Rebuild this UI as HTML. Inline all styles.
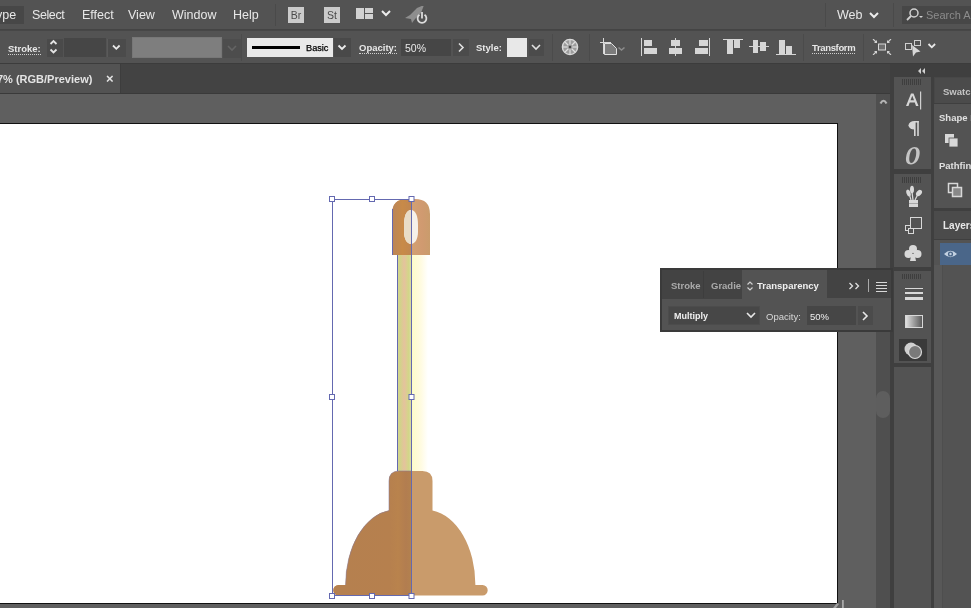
<!DOCTYPE html>
<html><head><meta charset="utf-8">
<style>
*{margin:0;padding:0;box-sizing:border-box}
html,body{width:971px;height:608px;overflow:hidden;background:#5e5e5e;font-family:"Liberation Sans",sans-serif;}
.a{position:absolute}
.t{position:absolute;white-space:nowrap;color:#e6e6e6}
#menu{left:0;top:0;width:971px;height:30px;background:#535353;border-bottom:1px solid #444}
#ctrl{left:0;top:30px;width:971px;height:34px;background:#535353;border-bottom:1px solid #3c3c3c}
#tabs{left:0;top:64px;width:890px;height:30px;background:#434343;border-bottom:1px solid #3a3a3a}
.mi{font-size:12.5px;top:8px;color:#e8e8e8}
.lbl{font-size:9.5px;font-weight:bold;color:#e8e8e8;border-bottom:1px dotted #cfcfcf;line-height:11px}
.chev{position:absolute;width:6px;height:6px;border-right:1.6px solid #ddd;border-bottom:1.6px solid #ddd;transform:rotate(45deg)}
.ibox{position:absolute;background:#474747;border:1px solid #4b4b4b}
.ic{position:absolute;background:#d6d6d6}
.t,.a{will-change:transform}</style></head><body>


<!-- CANVAS -->
<div class="a" style="left:0;top:94px;width:876px;height:514px;background:#5f5f5f"></div>
<div class="a" style="left:0;top:123px;width:838px;height:481px;background:#fff;border-top:1px solid #111;border-right:1px solid #111;border-bottom:1px solid #111"></div>
<!-- scrollbar -->
<div class="a" style="left:876px;top:93px;width:14px;height:515px;background:#4f4f4f"></div>
<svg class="a" style="left:877px;top:96px" width="12" height="10"><path d="M3.5 7.5 Q6.5 2 9.5 7.5" fill="none" stroke="#b4b4b4" stroke-width="2.2"/></svg>
<div class="a" style="left:876px;top:391px;width:14px;height:27px;background:#5e5e5e;border-radius:7px"></div>
<!-- cursor -->
<svg class="a" style="left:830px;top:590px" width="22" height="18"><rect x="12" y="10" width="1.8" height="8" fill="#a8a8a8"/><path d="M3 18 L7 13 L9 14 L6 18Z" fill="#a0a0a0"/></svg>

<!-- DOCK -->
<div class="a" style="left:890px;top:64px;width:81px;height:544px;background:#3f3f3f"></div>
<svg class="a" style="left:917px;top:67px" width="10" height="8"><path d="M1 4 L4 1 L4 7Z M5 4 L8 1 L8 7Z" fill="#d0d0d0"/></svg>
<!-- icon column -->
<div class="a" style="left:894px;top:77px;width:37px;height:531px;background:#535353"></div>
<div class="a" style="left:902px;top:79px;width:20px;height:6px;background:repeating-linear-gradient(90deg,#3e3e3e 0 1px,transparent 1px 2px)"></div>
<svg class="a" style="left:904px;top:91px" width="20" height="20"><path d="M2 15 L7 2.5 L9.5 2.5 L14.5 15 L12 15 L10.8 11.5 L5.7 11.5 L4.5 15Z M6.5 9.3 L10 9.3 L8.25 4.8Z" fill="#d6d6d6" fill-rule="evenodd"/><rect x="16" y="0.5" width="1.2" height="18" fill="#d0d0d0"/></svg>

<svg class="a" style="left:906px;top:120px" width="14" height="17"><path d="M8 1 L12.7 1 L12.7 2.5 L8 2.5Z" fill="#d6d6d6"/><path d="M8.5 1 A6 4.3 0 0 0 8.5 9.6 Z" fill="#d6d6d6"/><rect x="8" y="1" width="1.6" height="15" fill="#d6d6d6"/><rect x="11.2" y="1" width="1.6" height="15" fill="#d6d6d6"/></svg>
<svg class="a" style="left:904px;top:146px" width="18" height="20"><path d="M10.5 1 C14.5 1 16.5 4 15.5 9 C14.5 15 11 18.5 7 18.5 C3 18.5 1.2 15.5 2.2 10.5 C3.2 4.5 6.5 1 10.5 1Z M10.3 2.5 C8 2.5 6.2 6 5.5 10 C4.8 14 5.5 17 7.3 17 C9.5 17 11.3 13.5 12 9.5 C12.7 5.5 12 2.5 10.3 2.5Z" fill="#c4c4c4" fill-rule="evenodd"/></svg>
<div class="a" style="left:894px;top:169px;width:37px;height:5px;background:#3f3f3f"></div>
<div class="a" style="left:902px;top:177px;width:20px;height:6px;background:repeating-linear-gradient(90deg,#3e3e3e 0 1px,transparent 1px 2px)"></div>
<svg class="a" style="left:905px;top:185px" width="18" height="23"><g fill="#d8d8d8"><ellipse cx="3.5" cy="8" rx="2" ry="3.5" transform="rotate(-20 3.5 8)"/><ellipse cx="7" cy="4.5" rx="2" ry="3.8"/><ellipse cx="14" cy="8" rx="2.5" ry="3.5" transform="rotate(40 14 8)"/></g><g stroke="#d8d8d8" stroke-width="1.2"><line x1="4.5" y1="10" x2="6" y2="15"/><line x1="7" y1="7" x2="8" y2="15"/><line x1="12.5" y1="10" x2="10" y2="15"/></g><rect x="4" y="15" width="9" height="7" fill="#d8d8d8"/><line x1="4" y1="18.5" x2="13" y2="18.5" stroke="#9a9a9a" stroke-width="0.8"/></svg>
<svg class="a" style="left:904px;top:217px" width="19" height="18"><rect x="6.5" y="0.5" width="11" height="11" fill="none" stroke="#d8d8d8"/><rect x="1.5" y="8.5" width="5" height="5" fill="#535353" stroke="#d8d8d8"/><rect x="4.5" y="11.5" width="5" height="5" fill="#535353" stroke="#d8d8d8"/></svg>
<svg class="a" style="left:904px;top:244px" width="18" height="18"><circle cx="9" cy="5" r="4" fill="#d8d8d8"/><circle cx="4.5" cy="10" r="4" fill="#d8d8d8"/><circle cx="13.5" cy="10" r="4" fill="#d8d8d8"/><path d="M7.5 10 L6 17 L12 17 L10.5 10Z" fill="#d8d8d8"/></svg>
<div class="a" style="left:894px;top:267px;width:37px;height:4px;background:#3f3f3f"></div>
<div class="a" style="left:902px;top:274px;width:20px;height:5px;background:repeating-linear-gradient(90deg,#3e3e3e 0 1px,transparent 1px 2px)"></div>
<div class="a" style="left:905px;top:288px;width:18px;height:1px;background:#d8d8d8"></div>
<div class="a" style="left:905px;top:292px;width:18px;height:2px;background:#d8d8d8"></div>
<div class="a" style="left:905px;top:297px;width:18px;height:3px;background:#d8d8d8"></div>
<div class="a" style="left:905px;top:315px;width:18px;height:13px;background:linear-gradient(90deg,#e0e0e0,#5a5a5a);border:1px solid #d8d8d8"></div>
<div class="a" style="left:899px;top:339px;width:28px;height:22px;background:#3a3a3a"></div>
<svg class="a" style="left:903px;top:341px" width="20" height="19"><circle cx="8" cy="8" r="6.5" fill="#cfcfcf"/><circle cx="12" cy="11" r="6.5" fill="#7a7a7a" stroke="#d8d8d8" stroke-width="1.2"/></svg>
<div class="a" style="left:894px;top:363px;width:37px;height:4px;background:#3f3f3f"></div>

<!-- right panel -->
<div class="a" style="left:934px;top:77px;width:37px;height:26px;background:#474747"></div>
<div class="a" style="left:935px;top:78px;width:36px;height:25px;background:#4b4b4b"></div>
<div class="t" style="left:943px;top:86px;font-size:9.5px;font-weight:bold;color:#c4c4c4">Swatches</div>
<div class="a" style="left:934px;top:104px;width:37px;height:104px;background:#535353"></div>
<div class="t" style="left:939px;top:112px;font-size:9.5px;font-weight:bold;color:#e0e0e0">Shape Builder</div>
<svg class="a" style="left:944px;top:133px" width="16" height="16"><rect x="1" y="1" width="9" height="9" fill="#d8d8d8"/><rect x="5" y="5" width="9" height="9" fill="#d8d8d8" stroke="#535353" stroke-width="0.8"/></svg>
<div class="t" style="left:939px;top:160px;font-size:9.5px;font-weight:bold;color:#e0e0e0">Pathfinder</div>
<svg class="a" style="left:947px;top:182px" width="16" height="16"><rect x="1.5" y="1.5" width="9" height="9" fill="none" stroke="#d8d8d8" stroke-width="1.5"/><rect x="5.5" y="5.5" width="9" height="9" fill="#888" stroke="#d8d8d8" stroke-width="1.5"/></svg>
<div class="a" style="left:934px;top:211px;width:37px;height:28px;background:#4b4b4b"></div>
<div class="t" style="left:943px;top:220px;font-size:10px;font-weight:bold;color:#e8e8e8">Layers</div>
<div class="a" style="left:934px;top:240px;width:37px;height:368px;background:#535353"></div>
<div class="a" style="left:934px;top:265px;width:9px;height:343px;background:#585858;border-right:1px solid #4e4e4e"></div>
<div class="a" style="left:940px;top:243px;width:31px;height:22px;background:#4a6689"></div>
<svg class="a" style="left:943px;top:249px" width="15" height="10"><path d="M1 5 Q7.5 -1.5 14 5 Q7.5 11.5 1 5Z" fill="#c4d2e2"/><circle cx="7.5" cy="5" r="2.6" fill="#4a6689"/><circle cx="7.5" cy="5" r="1.2" fill="#c4d2e2"/></svg>

<!-- FLOATING TRANSPARENCY PANEL -->
<div class="a" style="left:660px;top:268px;width:233px;height:64px;background:#3a3a3a"></div>
<div class="a" style="left:662px;top:270px;width:229px;height:60px;background:#535353"></div>
<div class="a" style="left:662px;top:270px;width:80px;height:29px;background:#434343"></div>
<div class="a" style="left:703px;top:271px;width:1px;height:27px;background:#3d3d3d"></div>
<div class="a" style="left:827px;top:270px;width:64px;height:28px;background:#434343"></div>
<div class="t" style="left:671px;top:280px;font-size:9.5px;font-weight:bold;color:#aaaaaa">Stroke</div>
<div class="t" style="left:711px;top:280px;font-size:9.5px;font-weight:bold;color:#aaaaaa">Gradie</div>
<svg class="a" style="left:746px;top:280px" width="8" height="12"><path d="M1.5 4.5 L4 2 L6.5 4.5 M1.5 7.5 L4 10 L6.5 7.5" fill="none" stroke="#cfcfcf" stroke-width="1.2"/></svg>
<div class="t" style="left:757px;top:280px;font-size:9.5px;font-weight:bold;color:#f0f0f0">Transparency</div>
<svg class="a" style="left:848px;top:281px" width="14" height="10"><path d="M1.5 2 L4.5 5 L1.5 8 M7.5 2 L10.5 5 L7.5 8" fill="none" stroke="#e0e0e0" stroke-width="1.3"/></svg>
<div class="a" style="left:868px;top:279px;width:1px;height:13px;background:#aaa"></div>
<div class="a" style="left:876px;top:282px;width:11px;height:1px;background:#d8d8d8;box-shadow:0 3px 0 #d8d8d8,0 6px 0 #d8d8d8,0 9px 0 #d8d8d8"></div>
<div class="a" style="left:668px;top:306px;width:92px;height:19px;background:#474747;border:1px solid #4c4c4c"></div>
<div class="t" style="left:674px;top:311px;font-size:9px;font-weight:bold;color:#f0f0f0">Multiply</div>
<svg class="a" style="left:745px;top:310px" width="12" height="10"><path d="M2 3 L6 7 L10 3" fill="none" stroke="#e8e8e8" stroke-width="1.6"/></svg>
<div class="t" style="left:766px;top:311px;font-size:9.5px;color:#d8d8d8">Opacity:</div>
<div class="a" style="left:807px;top:306px;width:49px;height:19px;background:#464646"></div>
<div class="t" style="left:810px;top:311px;font-size:9.5px;color:#f0f0f0">50%</div>
<div class="a" style="left:858px;top:306px;width:15px;height:19px;background:#4b4b4b"></div>
<svg class="a" style="left:860px;top:310px" width="10" height="12"><path d="M3 2 L7 6 L3 10" fill="none" stroke="#e8e8e8" stroke-width="1.6"/></svg>

<!-- ARTWORK -->
<svg class="a" style="left:0;top:0" width="971" height="608">
  <defs>
    <linearGradient id="shaft" x1="0" x2="1" y1="0" y2="0">
      <stop offset="0" stop-color="#d6d694"/><stop offset="0.18" stop-color="#d0d488"/><stop offset="0.5" stop-color="#e5c29d"/><stop offset="0.82" stop-color="#d3d688"/><stop offset="1" stop-color="#d8daa0"/>
    </linearGradient>
    <linearGradient id="capL" x1="392" x2="411" y1="0" y2="0" gradientUnits="userSpaceOnUse">
      <stop offset="0" stop-color="#b9855a"/><stop offset="0.55" stop-color="#c88a48"/><stop offset="1" stop-color="#c08650"/>
    </linearGradient>
    <linearGradient id="capR" x1="411" x2="430" y1="0" y2="0" gradientUnits="userSpaceOnUse">
      <stop offset="0" stop-color="#d3a173"/><stop offset="0.6" stop-color="#d09a70"/><stop offset="1" stop-color="#c99c6c"/>
    </linearGradient>
    <linearGradient id="cupL" x1="340" x2="411" y1="0" y2="0" gradientUnits="userSpaceOnUse">
      <stop offset="0" stop-color="#b5804f"/><stop offset="0.7" stop-color="#b6804e"/><stop offset="0.82" stop-color="#b9834d"/><stop offset="0.93" stop-color="#b27d50"/><stop offset="1" stop-color="#b3814e"/>
    </linearGradient>
    <linearGradient id="glow" x1="0" x2="1" y1="0" y2="0">
      <stop offset="0" stop-color="#fcfcc6"/><stop offset="0.6" stop-color="#fffbe2"/><stop offset="1" stop-color="#ffffff"/>
    </linearGradient>
  </defs>
  <rect x="411" y="255" width="17" height="216" fill="url(#glow)"/>
  <rect x="397.5" y="255" width="13.5" height="216" fill="url(#shaft)"/>
  <!-- cap -->
  <path d="M392 255 L392 214 Q392 199 407 199 L415 199 Q430 199 430 214 L430 255 Z" fill="url(#capR)"/>
  <path d="M392 255 L392 214 Q392 199 407 199 L411 199 L411 255 Z" fill="url(#capL)"/>
  <path d="M411 210 C416 210 418 217 418 225 L418 232 C418 239 415 244 411 244 C407 244 404 239 404 232 L404 225 C404 217 406 210 411 210 Z" fill="#f6f1ea"/>
  <path d="M411 210 C406 210 404 217 404 225 L404 232 C404 239 407 244 411 244 Z" fill="#e9dcc6"/>
  <line x1="392.5" y1="209" x2="392.5" y2="255" stroke="#6469b0" stroke-width="1"/>
  <!-- cup -->
  <clipPath id="leftclip"><rect x="0" y="0" width="411" height="608"/></clipPath>
  <path id="cupp" d="M389 510.6 L389 481 Q389 471 399 471 L422.5 471 Q432.5 471 432.5 481 L432.5 510.6 A49.4 75 0 0 1 475.4 585 L482.5 585 A5.2 5.2 0 0 1 482.5 595.4 L338.5 595.4 A5.2 5.2 0 0 1 338.5 585 L345.6 585 A49.4 75 0 0 1 389 510.6 Z" fill="#c99b6b"/>
  <path d="M389 510.6 L389 481 Q389 471 399 471 L422.5 471 Q432.5 471 432.5 481 L432.5 510.6 A49.4 75 0 0 1 475.4 585 L482.5 585 A5.2 5.2 0 0 1 482.5 595.4 L338.5 595.4 A5.2 5.2 0 0 1 338.5 585 L345.6 585 A49.4 75 0 0 1 389 510.6 Z" fill="url(#cupL)" clip-path="url(#leftclip)"/>
  <path d="M411 471 L399 471 Q389 471 389 481 L389 510.6 A49.4 75 0 0 0 345.6 585" fill="none" stroke="#8a7c98" stroke-width="0.8" opacity="0.7"/>
  <!-- selection -->
  <g fill="none" stroke="#6469b0" stroke-width="1">
    <rect x="332.5" y="199.5" width="79" height="396"/>
    <line x1="397.5" y1="255" x2="397.5" y2="471"/>
  </g>
  <g fill="#fff" stroke="#6469b0" stroke-width="1">
    <rect x="329.5" y="196.5" width="5" height="5"/><rect x="369.5" y="196.5" width="5" height="5"/><rect x="409" y="196.5" width="5" height="5"/>
    <rect x="329.5" y="394.5" width="5" height="5"/><rect x="409" y="394.5" width="5" height="5"/>
    <rect x="329.5" y="593.5" width="5" height="5"/><rect x="369.5" y="593.5" width="5" height="5"/><rect x="409" y="593.5" width="5" height="5"/>
  </g>
</svg>

<!-- MENU BAR -->
<div id="menu" class="a">
  <div class="a" style="left:0;top:6px;width:24px;height:18px;background:#474747"></div>
  <div class="t mi" style="left:-4.5px">ype</div>
  <div class="t mi" style="left:32px;letter-spacing:-0.4px">Select</div>
  <div class="t mi" style="left:82px">Effect</div>
  <div class="t mi" style="left:128px">View</div>
  <div class="t mi" style="left:172px">Window</div>
  <div class="t mi" style="left:233px">Help</div>
  <div class="a" style="left:275px;top:4px;width:1px;height:22px;background:#4a4a4a"></div>
  <div class="a" style="left:288px;top:7px;width:16px;height:16px;background:#cbcbcb;color:#4a4a4a;font-size:10.5px;text-align:center;line-height:16px">Br</div>
  <div class="a" style="left:324px;top:7px;width:16px;height:16px;background:#cbcbcb;color:#4a4a4a;font-size:10.5px;text-align:center;line-height:16px">St</div>
  <div class="a" style="left:356px;top:8px;width:8px;height:11px;background:#d2d2d2"></div>
  <div class="a" style="left:365px;top:8px;width:8px;height:5px;background:#d2d2d2"></div>
  <div class="a" style="left:365px;top:14px;width:8px;height:5px;background:#d2d2d2"></div>
  <svg class="a" style="left:380px;top:8px" width="12" height="10"><path d="M2 3 L6 7 L10 3" fill="none" stroke="#ececec" stroke-width="2"/></svg>
  <div class="a" style="left:404px;top:6px;width:26px;height:20px">
    <svg width="26" height="20"><path d="M1 12 L6 9 L13 2 L20 -1 L17 7 L11 13 L8 17 L7 13 Z" fill="#8e8e8e"/><path d="M15.5 8.8 A4.4 4.4 0 1 0 20.5 8.8" fill="#535353" stroke="#dcdcdc" stroke-width="1.8"/><line x1="18" y1="6" x2="18" y2="12.5" stroke="#dcdcdc" stroke-width="1.8"/></svg>
  </div>
  <div class="a" style="left:825px;top:3px;width:1px;height:24px;background:#4a4a4a"></div>
  <div class="t mi" style="left:837px">Web</div>
  <svg class="a" style="left:868px;top:10px" width="12" height="10"><path d="M2 3 L6 7 L10 3" fill="none" stroke="#ececec" stroke-width="2"/></svg>
  <div class="a" style="left:893px;top:3px;width:1px;height:24px;background:#4a4a4a"></div>
  <div class="a" style="left:902px;top:6px;width:69px;height:18px;background:#474747"></div>
  <svg class="a" style="left:904px;top:7px" width="20" height="16"><circle cx="10" cy="6" r="4" fill="none" stroke="#d0d0d0" stroke-width="1.5"/><line x1="7" y1="9" x2="3" y2="13" stroke="#d0d0d0" stroke-width="1.8"/><path d="M15 9 L19 9 L17 11Z" fill="#d0d0d0"/></svg>
  <div class="t" style="left:926px;top:9px;font-size:11px;color:#8c8c8c">Search A</div>
</div>

<!-- CONTROL BAR -->
<div id="ctrl" class="a">
  <div class="a" style="left:0;top:0;width:971px;height:1px;background:#474747"></div>
  <div class="t lbl" style="left:8px;top:13px">Stroke:</div>
  <div class="ibox" style="left:47px;top:9px;width:16px;height:18px;background:#4a4a4a;border:none"></div>
  <svg class="a" style="left:48px;top:8px" width="12" height="16"><path d="M2.5 6 L5.5 3 L8.5 6" fill="none" stroke="#e4e4e4" stroke-width="1.8"/><path d="M2.5 11.5 L5.5 14.5 L8.5 11.5" fill="none" stroke="#e4e4e4" stroke-width="1.8"/></svg>
  <div class="ibox" style="left:64px;top:8px;width:42px;height:19px;background:#464646;border:none"></div>
  <div class="ibox" style="left:107px;top:9px;width:19px;height:18px;background:#4b4b4b;border:none;border-left:1px solid #5a5a5a"></div>
  <svg class="a" style="left:110px;top:12px" width="12" height="10"><path d="M3 3.5 L6.3 6.8 L9.6 3.5" fill="none" stroke="#e8e8e8" stroke-width="1.8"/></svg>
  <div class="a" style="left:132px;top:7px;width:90px;height:21px;background:#7e7e7e;border:1px solid #777"></div>
  <div class="a" style="left:223px;top:9px;width:18px;height:19px;background:#4d4d4d"></div><svg class="a" style="left:226px;top:13px" width="12" height="10"><path d="M2 3 L6 7 L10 3" fill="none" stroke="#646464" stroke-width="1.6"/></svg>
  <div class="a" style="left:241px;top:4px;width:1px;height:27px;background:#4b4b4b"></div>
  <div class="a" style="left:247px;top:8px;width:86px;height:19px;background:#e9e9e9"></div>
  <div class="a" style="left:252px;top:16px;width:48px;height:3px;background:#000"></div>
  <div class="t" style="left:306px;top:13px;font-size:9.2px;color:#000;-webkit-text-stroke:0.25px #000">Basic</div>
  <div class="a" style="left:334px;top:8px;width:17px;height:19px;background:#494949"></div>
  <svg class="a" style="left:336px;top:12px" width="12" height="10"><path d="M2.5 3.5 L6 7 L9.5 3.5" fill="none" stroke="#ececec" stroke-width="1.8"/></svg>
  <div class="t lbl" style="left:359px;top:12px">Opacity:</div>
  <div class="ibox" style="left:401px;top:9px;width:50px;height:17px;background:#464646;border:none"></div>
  <div class="t" style="left:405px;top:12px;font-size:10.5px;color:#e8e8e8">50%</div>
  <div class="ibox" style="left:453px;top:9px;width:16px;height:17px;background:#4b4b4b;border:none"></div>
  <svg class="a" style="left:456px;top:11px" width="10" height="13"><path d="M3 2.5 L7 6.5 L3 10.5" fill="none" stroke="#e0e0e0" stroke-width="1.6"/></svg>
  <div class="t lbl" style="left:476px;top:12px;border:none">Style:</div>
  <div class="a" style="left:507px;top:8px;width:20px;height:19px;background:#e8e8e8"></div>
  <div class="a" style="left:529px;top:9px;width:15px;height:17px;background:#4b4b4b"></div>
  <svg class="a" style="left:530px;top:12px" width="12" height="10"><path d="M2 3 L6 7 L10 3" fill="none" stroke="#e0e0e0" stroke-width="1.6"/></svg>
  <div class="a" style="left:552px;top:4px;width:1px;height:27px;background:#4b4b4b"></div>
  <svg class="a" style="left:561px;top:38px;top:8px" width="18" height="18"><circle cx="9" cy="9" r="7.6" fill="#9c9c9c" stroke="#dadada" stroke-width="1.4"/><g stroke="#dedede" stroke-width="1.2"><line x1="9" y1="2" x2="9" y2="16"/><line x1="2" y1="9" x2="16" y2="9"/><line x1="4" y1="4" x2="14" y2="14"/><line x1="14" y1="4" x2="4" y2="14"/></g><circle cx="9" cy="9" r="2.4" fill="#9c9c9c"/><circle cx="9" cy="9" r="1.2" fill="#444"/></svg>
  <div class="a" style="left:589px;top:4px;width:1px;height:27px;background:#4b4b4b"></div>
  <svg class="a" style="left:598px;top:6px" width="30" height="22"><path d="M5.5 2 L5.5 18 M2 6.5 L13 6.5" stroke="#d8d8d8" stroke-width="1" fill="none"/><path d="M6.5 7.5 L13.5 7.5 L18.5 12.5 L18.5 18.5 L6.5 18.5Z" fill="#7c7c7c" stroke="#e0e0e0" stroke-width="1"/><path d="M20.5 11.5 L23.5 14 L26.5 11.5" fill="none" stroke="#8c8c8c" stroke-width="1.6"/></svg>
  <!-- align left -->
  <div class="ic" style="left:641px;top:8px;width:1px;height:18px"></div>
  <div class="ic" style="left:644px;top:10px;width:8px;height:6px"></div>
  <div class="ic" style="left:644px;top:18px;width:13px;height:6px"></div>
  <!-- align h center -->
  <div class="ic" style="left:675px;top:8px;width:1px;height:18px"></div>
  <div class="ic" style="left:671px;top:10px;width:9px;height:6px"></div>
  <div class="ic" style="left:669px;top:18px;width:13px;height:6px"></div>
  <!-- align right -->
  <div class="ic" style="left:709px;top:8px;width:1px;height:18px"></div>
  <div class="ic" style="left:699px;top:10px;width:9px;height:6px"></div>
  <div class="ic" style="left:695px;top:18px;width:13px;height:6px"></div>
  <!-- align top -->
  <div class="ic" style="left:723px;top:9px;width:20px;height:1px"></div>
  <div class="ic" style="left:727px;top:10px;width:6px;height:14px"></div>
  <div class="ic" style="left:734px;top:10px;width:6px;height:8px"></div>
  <!-- align v center -->
  <div class="ic" style="left:749px;top:16px;width:20px;height:1px"></div>
  <div class="ic" style="left:753px;top:10px;width:5px;height:13px"></div>
  <div class="ic" style="left:760px;top:12px;width:6px;height:9px"></div>
  <!-- align bottom -->
  <div class="ic" style="left:776px;top:24px;width:20px;height:1px"></div>
  <div class="ic" style="left:779px;top:10px;width:6px;height:14px"></div>
  <div class="ic" style="left:786px;top:16px;width:6px;height:8px"></div>
  <div class="a" style="left:803px;top:4px;width:1px;height:27px;background:#4b4b4b"></div>
  <div class="t lbl" style="left:812px;top:12px;letter-spacing:-0.35px">Transform</div>
  <div class="a" style="left:863px;top:4px;width:1px;height:27px;background:#4b4b4b"></div>
  <svg class="a" style="left:872px;top:9px" width="20" height="16"><rect x="6.5" y="5" width="7" height="6" fill="#6e6e6e" stroke="#d8d8d8" stroke-width="1"/><g fill="#d4d4d4"><path d="M5 4 L5 1 L2 4Z"/><path d="M15 4 L15 1 L18 4Z"/><path d="M5 12 L5 15 L2 12Z"/><path d="M15 12 L15 15 L18 12Z"/></g><g stroke="#d4d4d4" stroke-width="1.1"><line x1="1" y1="0" x2="4" y2="3"/><line x1="19" y1="0" x2="16" y2="3"/><line x1="1" y1="16" x2="4" y2="13"/><line x1="19" y1="16" x2="16" y2="13"/></g></svg>
  <svg class="a" style="left:903px;top:6px" width="22" height="22"><rect x="2.5" y="7.5" width="6" height="6" fill="none" stroke="#cfcfcf"/><rect x="11.5" y="4.5" width="6" height="5" fill="none" stroke="#cfcfcf"/><path d="M9 9 L17.5 15.5 L13 16.5 L10 20.5Z" fill="#d8d8d8"/></svg>
  <svg class="a" style="left:926px;top:11px" width="12" height="10"><path d="M2.5 3 L5.8 6.3 L9.1 3" fill="none" stroke="#e8e8e8" stroke-width="1.8"/></svg>
</div>

<!-- TAB BAR -->
<div id="tabs" class="a">
  <div class="a" style="left:0;top:0;width:121px;height:29px;background:#535353;border-right:1px solid #3d3d3d"></div>
  <div class="t" style="left:-3px;top:9px;font-size:11px;font-weight:bold;color:#e4e4e4">7% (RGB/Preview)</div>
  <div class="t" style="left:106px;top:7px;font-size:13px;font-weight:bold;color:#e4e4e4">×</div>
</div>

</body></html>
